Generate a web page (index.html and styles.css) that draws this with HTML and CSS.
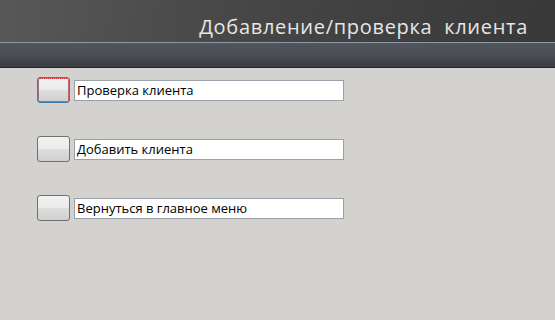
FILE: index.html
```html
<html lang="ru">
<head>
  <meta charset="UTF-8">
  <meta name="viewport" content="width=device-width, initial-scale=1.0">
  <title>Добавление/проверка клиента</title>
  <link rel="stylesheet" href="styles.css">
</head>
<body>
  <div class="header">
    <h1 class="title">Добавление/проверка&nbsp; клиента</h1>
  </div>
  <div class="toolbar"></div>
  <ul class="menu">
    <li class="row">
      <button class="btn focus"></button>
      <div class="field">Проверка клиента</div>
    </li>
    <li class="row">
      <button class="btn"></button>
      <div class="field">Добавить клиента</div>
    </li>
    <li class="row">
      <button class="btn"></button>
      <div class="field">Вернуться в главное меню</div>
    </li>
  </ul>
</body>
</html>
```

FILE: styles.css
```css
* {
  padding: 0;
  margin: 0;
  box-sizing: border-box;
}
ul {
  list-style: none;
}
body {
  width: 555px;
  height: 320px;
  background-color: #d4d2cf;
  font-family: "Open Sans", "DejaVu Sans", sans-serif;
  overflow: hidden;
}
.header {
  height: 43px;
  display: flex;
  justify-content: flex-end;
  align-items: flex-end;
  padding: 0 27px 0 0;
  background: linear-gradient(100deg, #585858 0%, #464646 45%, #383838 100%);
  border-bottom: 1px solid #8e9aab;
}
.title {
  font-size: 20px;
  font-weight: normal;
  color: #e6e6e6;
  line-height: 26px;
  padding-bottom: 2px;
  letter-spacing: 0.7px;
}
.toolbar {
  height: 25px;
  background: linear-gradient(180deg, #52565c 0%, #4a4e54 50%, #3a3c40 100%);
  border-bottom: 1px solid #222326;
}
.menu {
  padding: 9px 0 0 37px;
  display: flex;
  flex-direction: column;
  gap: 33px;
}
.row {
  display: flex;
  align-items: center;
  gap: 4px;
  height: 26px;
}
.btn {
  width: 33px;
  height: 26px;
  border: 1px solid #707070;
  border-radius: 3px;
  background: linear-gradient(180deg, #f2f2f2 0%, #ebebeb 48%, #dddddd 52%, #d0d0d0 100%);
}
.btn.focus {
  border: 1px solid #3c7fb1;
  box-shadow: inset 0 0 0 1px #6fb0e6;
  outline: 1px dotted #d0302a;
  outline-offset: -2px;
}
.field {
  width: 270px;
  height: 21px;
  background-color: #fff;
  border: 1px solid #9aa0a9;
  padding: 0 2px;
  font-size: 13px;
  line-height: 19px;
  color: #000;
}
```
